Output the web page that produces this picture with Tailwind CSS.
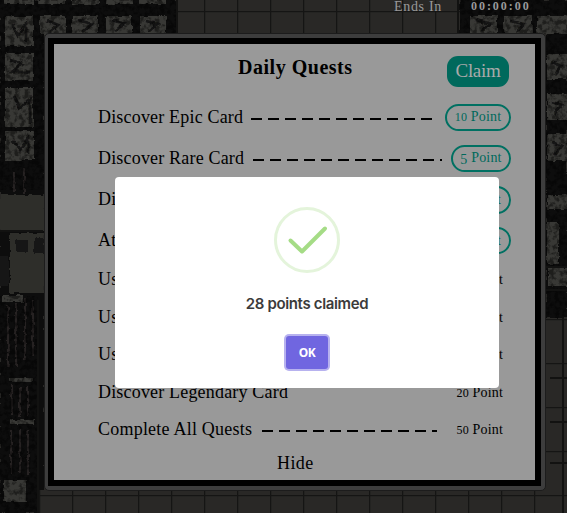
<!DOCTYPE html>
<html lang="en">
<head>
<meta charset="utf-8">
<title>Daily Quests</title>
<script src="https://cdn.jsdelivr.net/npm/@tailwindcss/browser@4"></script>
</head>
<body class="relative h-[513px] w-[567px] overflow-hidden bg-[#232220] font-['Liberation_Serif',serif] text-black">
<!-- dungeon map -->
<svg class="absolute inset-0" width="567" height="513" viewBox="0 0 567 513" aria-hidden="true">
  <defs>
    <filter id="rough" x="0" y="0" width="100%" height="100%"><feTurbulence type="fractalNoise" baseFrequency=".14" numOctaves="3" seed="8" result="n"/><feDisplacementMap in="SourceGraphic" in2="n" scale="4" xChannelSelector="R" yChannelSelector="G"/><feGaussianBlur stdDeviation=".6"/></filter>
    <filter id="grain" x="0" y="0" width="100%" height="100%"><feTurbulence type="fractalNoise" baseFrequency=".2" numOctaves="3" seed="4"/><feColorMatrix values="0 0 0 0 0  0 0 0 0 0  0 0 0 0 0  4 0 0 0 -1.7" result="g"/><feComposite in="g" in2="SourceGraphic" operator="in"/></filter>
    <pattern id="tile" width="33" height="44" patternUnits="userSpaceOnUse" x="6" y="11"><rect width="33" height="44" fill="#292826"/><path d="M0 .5H33M.5 0V44" stroke="#151514" stroke-width="1.6"/></pattern>
  </defs>
  <rect width="567" height="513" fill="url(#tile)"/>
  <g filter="url(#rough)">
    <path fill="#0d0d0c" d="M0 0H177V34H44V195H0ZM460 0H567V195H546V34H460ZM0 230H44V490H38V513H0ZM546 195H567V318H546Z"/>
    <g fill="#393836">
      <path d="M5 0h29v4H5zM38 0h27v4H38zM72 0h27v4H72zM106 0h27v4H106zM140 0h26v4H140z"/>
      <path d="M5 16h28v30H5zM40 16h26v18H40zM72 16h26v18H72zM106 16h26v18H106zM140 16h26v18H140z"/>
      <path d="M5 53h28v27H5zM5 88h28v39H5zM5 131h29v29H5z"/>
      <path d="M470 16h27v18H470zM504 16h28v18H504zM537 16h30v18H537zM547 54h20v25H547zM547 94h20v26H547zM547 134h20v27H547zM547 195h20v14H547zM547 222h12v42H547zM548 268h19v18H548z"/>
      <path d="M3 295h20v7H3zM8 378h24v4H8zM10 420h24v4H10zM4 480h22v22H4z"/>
    </g>
    <path d="M0 195h44v36H0zM10 233h34v60H10z" fill="#2f2e2b"/>
    <path d="M0 256h9v30H0zM34 238h10v16H34zM16 240h12v12H16z" fill="#171716"/>
    <path d="M12 24l6 12 8-13v18M10 60l12 4-10 8h18M14 96l6 12 10-9v24M12 140l8 10 8-12v16M46 20l12 5-8 7M78 20l14 4-9 8M112 20l12 4-9 7M146 21l12 3-9 8M476 20l14 4-8 7M510 21l14 3-7 8M551 62l11 4-7 8M551 102l11 3-8 9M551 142l11 4-7 9" fill="none" stroke="#141413" stroke-width="2.8"/>
    <path d="M8 305v62M16 303v64M25 298v62M33 300v56M12 385v30M20 387v30M28 386v30M11 430v44M20 429v44M28 430v46M14 172v20M24 168v26" stroke="#252423" stroke-width="2"/>
  </g>
  <path d="M0 0H177V34H44V190H0ZM460 0H567V318H546V34H460ZM0 296H38V513H0Z" filter="url(#grain)" opacity=".45"/>
  <path d="M38 300V513M550 378h17M550 422h17M550 463h17M563 318v195M0 231h43M546 267h21M546 290h21M177 0v34M458 0v34" stroke="#121211" stroke-width="2"/>
</svg>

<div class="relative flex h-[33px] justify-end pr-[37px] text-[14px] leading-[13px] text-[#999]">
  <span class="mr-[29px] tracking-[0.7px]">Ends In</span>
  <span class="w-[59px] text-[12px] leading-[13px] font-bold tracking-[1.95px] whitespace-nowrap">00:00:00</span>
</div>

<main class="relative ml-[44px] h-[458px] w-[502px] rounded-[5px] border border-[#1c1c1c] bg-[#3d3d3d] p-[4px_4px_4px_3px]">
  <section class="h-full w-full border-[6px] border-black bg-[#999] pt-[1px] pl-[44px] pr-[24px] text-[18px] tracking-[0.18px]">
    <header class="relative h-[52px]">
      <h1 class="pt-[9px] pl-[140px] text-[20px] leading-[26px] font-bold tracking-[0.52px]">Daily Quests</h1>
      <button class="absolute top-[11px] right-[2px] h-[31px] w-[62px] rounded-[11px] bg-[#00695c] pb-[2px] text-[19px] leading-none tracking-[-0.3px] text-[#aaa]">Claim</button>
    </header>
    <ul>
      <li class="flex h-[41px] items-center"><span class="w-[153px] whitespace-nowrap">Discover Epic Card</span><i class="mt-[2px] h-[2px] w-[181px] bg-[repeating-linear-gradient(90deg,#000_0_11px,transparent_11px_17px)]"></i><b class="ml-auto flex h-[27px] w-[66px] items-center justify-center rounded-full border-2 border-[#007062] pb-[2px] text-[14px] font-normal text-[#00695c]"><span class="text-[12px]">10</span>&nbsp;Point</b></li>
      <li class="flex h-[41px] items-center"><span class="w-[155px] whitespace-nowrap">Discover Rare Card</span><i class="mt-[2px] h-[2px] w-[189px] bg-[repeating-linear-gradient(90deg,#000_0_11px,transparent_11px_17px)]"></i><b class="ml-auto flex h-[27px] w-[60px] items-center justify-center rounded-full border-2 border-[#007062] pb-[2px] text-[14px] font-normal text-[#00695c]"><span class="mt-[3px]">5</span>&nbsp;Point</b></li>
      <li class="flex h-[41px] items-center justify-between"><span>Di</span><b class="flex h-[28px] w-[60px] items-center justify-end rounded-full border-2 border-[#007062] pr-[8px] pb-px text-[14px] font-normal text-[#00695c]">Point</b></li>
      <li class="flex h-[41px] items-center justify-between"><span>At</span><b class="flex h-[27px] w-[60px] items-center justify-end rounded-full border-2 border-[#007062] pr-[8px] pb-px text-[14px] font-normal text-[#00695c]">Point</b></li>
      <li class="flex h-[37.5px] items-center justify-between pr-[8px]"><span>Us</span><span class="text-[14px]">Point</span></li>
      <li class="flex h-[37.5px] items-center justify-between pr-[8px]"><span>Us</span><span class="text-[14px]">Point</span></li>
      <li class="flex h-[37.5px] items-center justify-between pr-[8px]"><span>Us</span><span class="text-[14px]">Point</span></li>
      <li class="flex h-[37.5px] items-center justify-between pr-[8px]"><span>Discover Legendary Card</span><span class="text-[14px]"><span class="text-[12px]">20</span> Point</span></li>
      <li class="flex h-[37.5px] items-center pr-[8px]"><span class="w-[164px] tracking-[0.22px] whitespace-nowrap">Complete All Quests</span><i class="mt-[3px] h-[2px] w-[175px] bg-[repeating-linear-gradient(90deg,#000_0_11px,transparent_11px_17px)]"></i><span class="ml-auto text-[14px]"><span class="text-[12px]">50</span> Point</span></li>
    </ul>
    <button class="ml-[179px] block text-[18px] leading-[29px] tracking-[0.4px]">Hide</button>
  </section>
</main>

<div role="dialog" class="absolute top-[177px] left-[115px] flex h-[211px] w-[384px] flex-col items-center rounded-[4px] bg-white pt-[30px]">
  <svg width="66" height="66" viewBox="0 0 66 66" fill="none" aria-hidden="true">
    <circle cx="33" cy="33" r="31.5" stroke="#e4f4db" stroke-width="3"/>
    <path d="M16.5 33.5 28 44.5 51 21.5" stroke="#a5dc86" stroke-width="4" stroke-linecap="round" stroke-linejoin="round"/>
  </svg>
  <h2 class="mt-[20px] font-['Inter',sans-serif] text-[15px] leading-[22px] font-semibold tracking-[-0.35px] whitespace-nowrap text-[#3b3b3b]">28 points claimed</h2>
  <button class="mt-[21px] h-[33px] w-[42px] rounded-[3px] bg-[#7066e0] pt-px font-['Noto_Sans',sans-serif] text-[12px] leading-none font-bold tracking-[-0.6px] text-white ring-[2px] ring-[#b7b2ef]">OK</button>
</div>
</body>
</html>
